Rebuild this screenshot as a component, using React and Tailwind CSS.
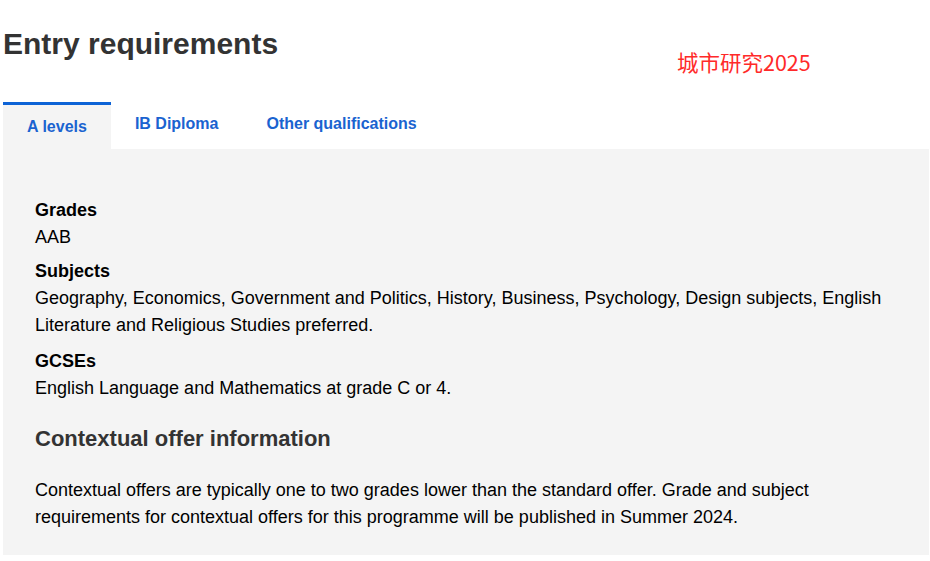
export default function App() {
  const tabs = ['A levels', 'IB Diploma', 'Other qualifications'];
  return (
    <div className="w-[930px] h-[561px] bg-white font-['Liberation_Sans',Arial,sans-serif] text-black">
      <div className="relative pl-[3px] pr-[1px]">
        <h1 className="pt-[24px] text-[30px] leading-[40px] font-bold text-[#333]">Entry requirements</h1>
        <span className="absolute left-[677px] top-[48px] text-[21.5px] leading-[28px] text-[#ff2a2a] font-['Noto_Sans_CJK_SC',sans-serif]">城市研究2025</span>

        {/* Tabs */}
        <div className="mt-[38px] flex">
          {tabs.map((t, i) =>
            i === 0 ? (
              <div key={t} className="border-t-[3px] border-[#0d63d6] bg-[#f4f4f4] px-6 pt-[10px] h-[47px] text-[16px] font-bold text-[#1a63d0]">
                {t}
              </div>
            ) : (
              <div key={t} className="px-6 pt-[10px] h-[47px] text-[16px] font-bold text-[#1a63d0]">
                {t}
              </div>
            )
          )}
        </div>

        {/* Panel */}
        <div className="bg-[#f4f4f4] px-8 pt-[48px] pb-[24px] text-[18px] leading-[27px]">
          <dl>
            <dt className="font-bold">Grades</dt>
            <dd>AAB</dd>
            <dt className="font-bold mt-[7px]">Subjects</dt>
            <dd>
              Geography, Economics, Government and Politics, History, Business, Psychology, Design subjects, English
              Literature and Religious Studies preferred.
            </dd>
            <dt className="font-bold mt-[9px]">GCSEs</dt>
            <dd>English Language and Mathematics at grade C or 4.</dd>
          </dl>
          <h2 className="mt-[22px] text-[22px] leading-[30px] font-bold text-[#333]">Contextual offer information</h2>
          <p className="mt-[23px]">
            Contextual offers are typically one to two grades lower than the standard offer. Grade and subject
            requirements for contextual offers for this programme will be published in Summer 2024.
          </p>
        </div>
      </div>
    </div>
  );
}
